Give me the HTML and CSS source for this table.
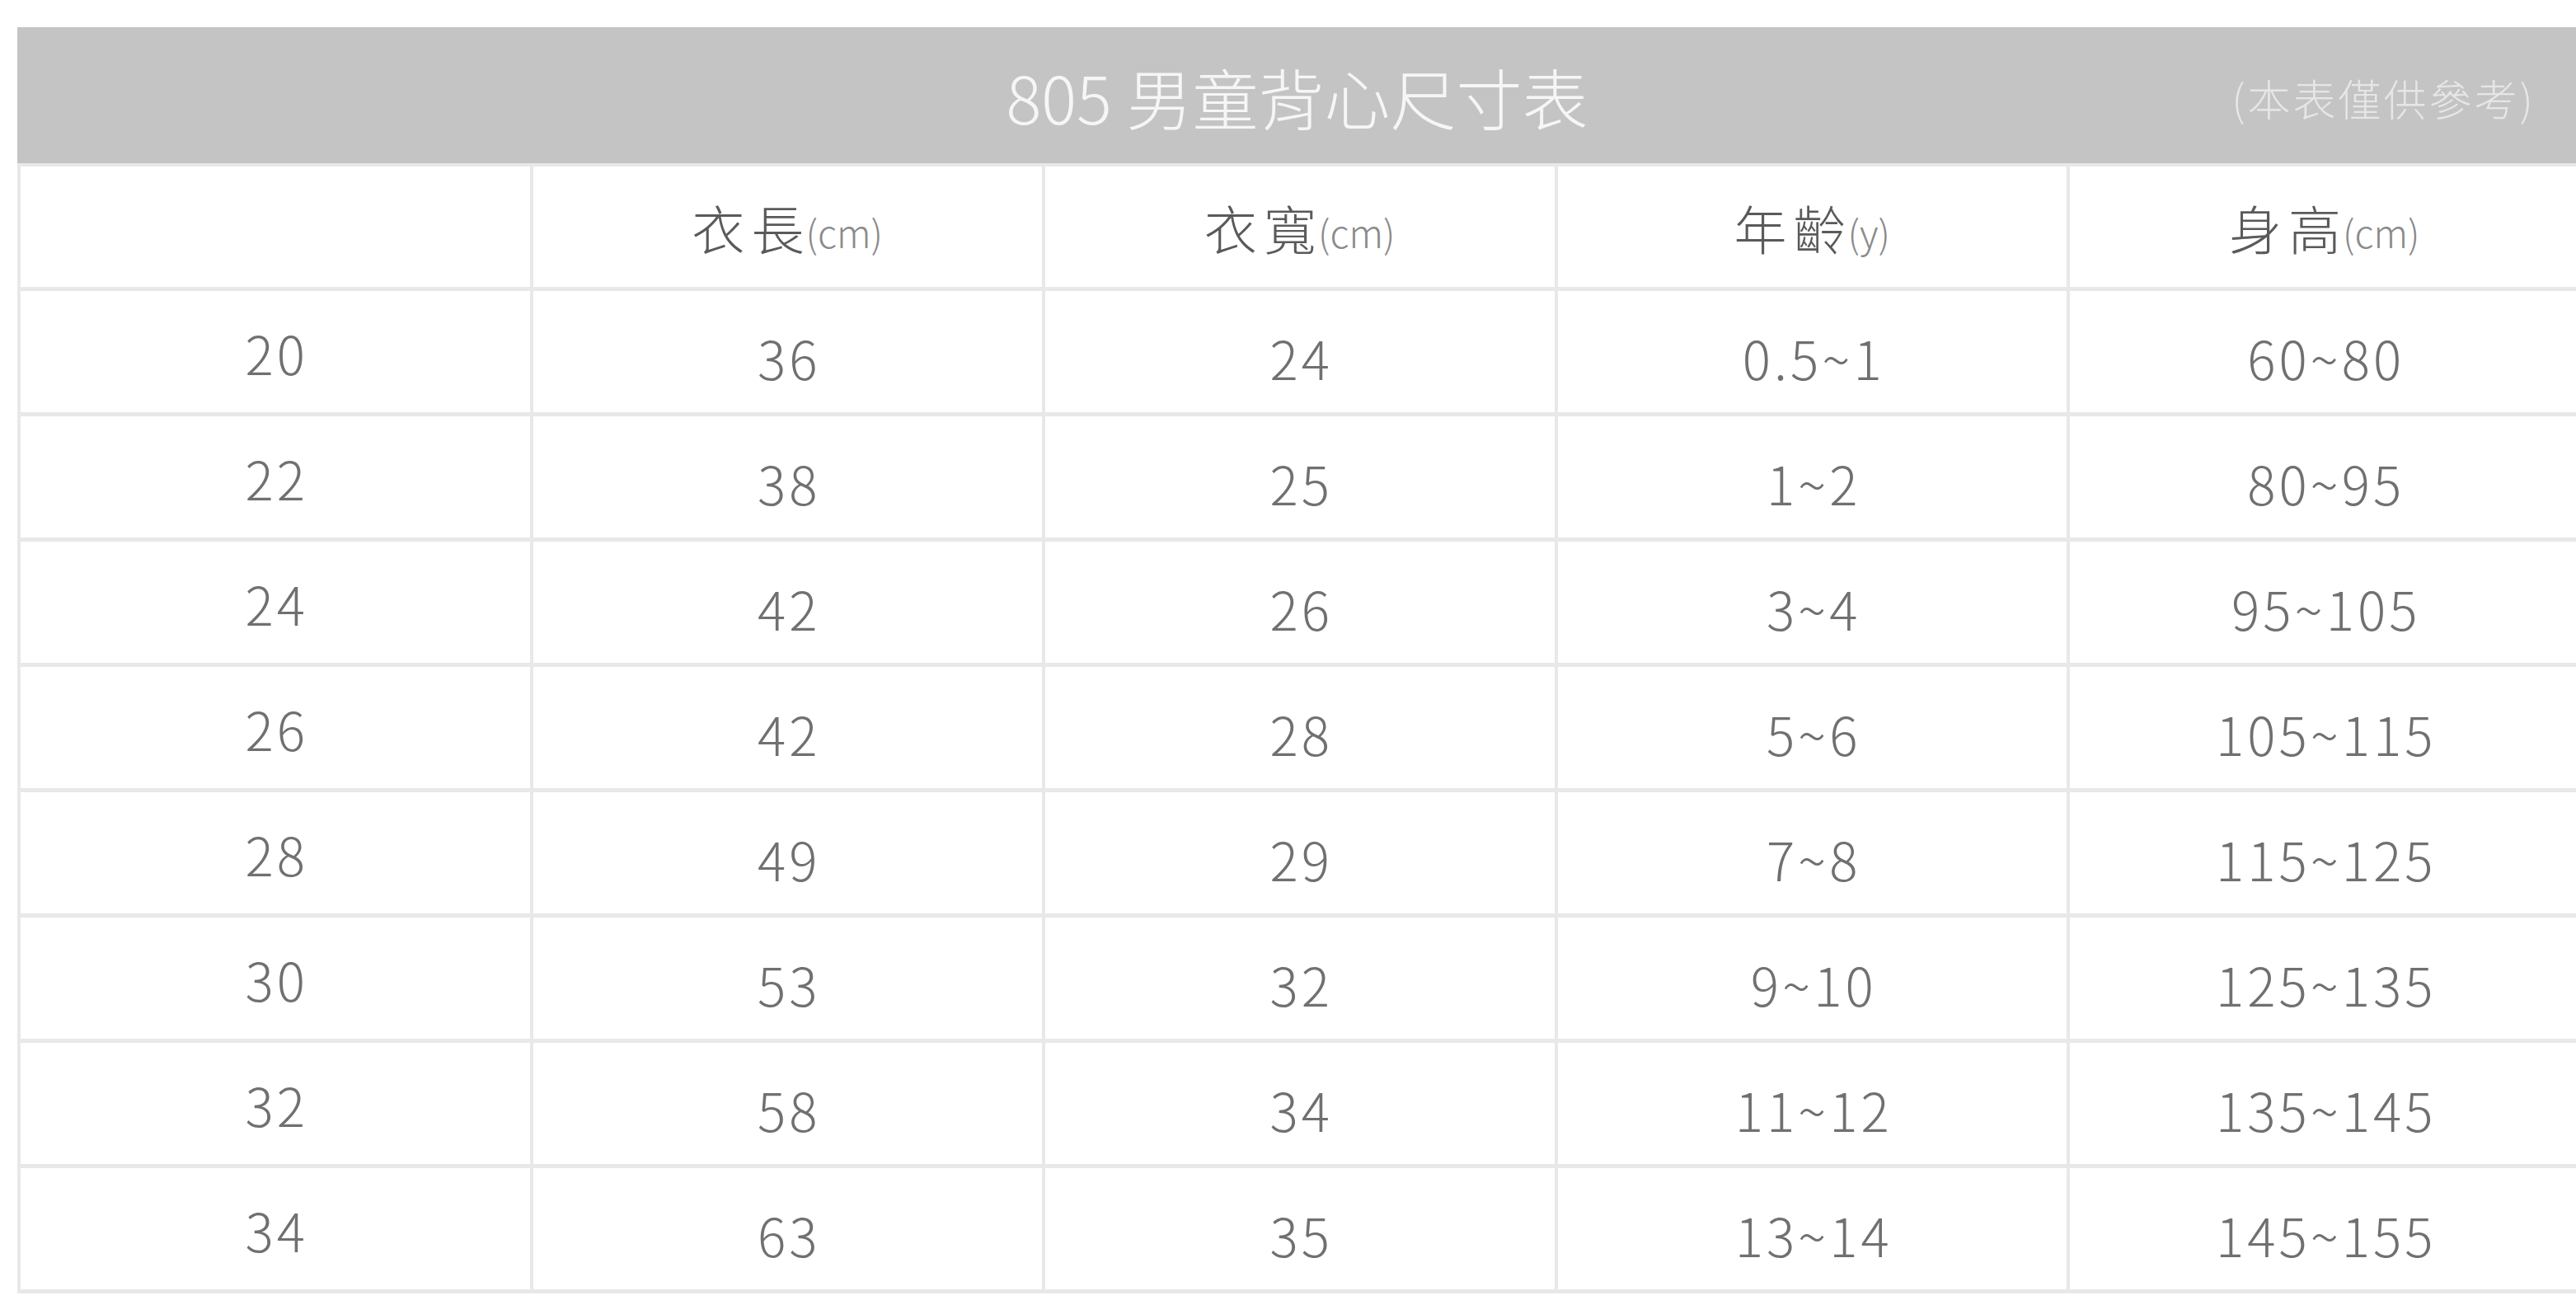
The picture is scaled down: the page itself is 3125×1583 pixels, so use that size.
FILE: index.html
```html
<!DOCTYPE html>
<html lang="zh-Hant">
<head>
<meta charset="utf-8">
<title>805 男童背心尺寸表</title>
<link rel="stylesheet" href="styles.css">
</head>
<body>
<div class="chart">
  <div class="title-bar">
    <span class="spacer"></span>
    <h1 class="title">805 男童背心尺寸表</h1>
    <span class="note">(本表僅供參考)</span>
  </div>
  <div class="grid">
    <div class="cell head"></div>
    <div class="cell head"><span class="lbl">衣長</span><span class="unit">(cm)</span></div>
    <div class="cell head"><span class="lbl">衣寬</span><span class="unit">(cm)</span></div>
    <div class="cell head"><span class="lbl">年齡</span><span class="unit">(y)</span></div>
    <div class="cell head"><span class="lbl">身高</span><span class="unit">(cm)</span></div>

    <div class="cell size">20</div><div class="cell val">36</div><div class="cell val">24</div><div class="cell val">0.5~1</div><div class="cell val">60~80</div>
    <div class="cell size">22</div><div class="cell val">38</div><div class="cell val">25</div><div class="cell val">1~2</div><div class="cell val">80~95</div>
    <div class="cell size">24</div><div class="cell val">42</div><div class="cell val">26</div><div class="cell val">3~4</div><div class="cell val">95~105</div>
    <div class="cell size">26</div><div class="cell val">42</div><div class="cell val">28</div><div class="cell val">5~6</div><div class="cell val">105~115</div>
    <div class="cell size">28</div><div class="cell val">49</div><div class="cell val">29</div><div class="cell val">7~8</div><div class="cell val">115~125</div>
    <div class="cell size">30</div><div class="cell val">53</div><div class="cell val">32</div><div class="cell val">9~10</div><div class="cell val">125~135</div>
    <div class="cell size">32</div><div class="cell val">58</div><div class="cell val">34</div><div class="cell val">11~12</div><div class="cell val">135~145</div>
    <div class="cell size">34</div><div class="cell val">63</div><div class="cell val">35</div><div class="cell val">13~14</div><div class="cell val">145~155</div>
  </div>
</div>
</body>
</html>
```

FILE: styles.css
```css
html, body {
  margin: 0;
  padding: 0;
  background: #ffffff;
  overflow: hidden;
}

body {
  font-family: "Noto Sans CJK TC", "Noto Sans", "Liberation Sans", sans-serif;
  font-weight: 300;
}

.chart {
  margin: 33px 0 0 21px;
  width: 3115px;
}

.title-bar {
  height: 165px;
  background: #c4c4c4;
  display: grid;
  grid-template-columns: 1fr auto 1fr;
  align-items: center;
}

.title {
  margin: 0 10px 0 0;
  font-size: 80px;
  font-weight: 300;
  color: #f6f6f6;
  line-height: 1;
  white-space: nowrap;
}

.note {
  justify-self: end;
  margin-right: 60px;
  font-size: 52px;
  color: #e6e6e6;
  line-height: 1;
  white-space: nowrap;
  padding-top: 6px;
  letter-spacing: 3px;
}

.grid {
  display: grid;
  grid-template-columns: repeat(5, 617.5px);
  grid-template-rows: 146px repeat(8, 147px);
  gap: 5px 4px;
  padding: 4px 0 5px 4px;
  background: #e8e8e8;
}

.cell {
  background: #ffffff;
  display: flex;
  align-items: center;
  justify-content: center;
  color: #707070;
  font-size: 64px;
  line-height: 1;
}

.size,
.val {
  letter-spacing: 4px;
  padding-left: 4px;
}

.head .lbl {
  font-size: 64px;
  color: #5a5a5a;
  letter-spacing: 8px;
  margin-right: -6px;
}

.head .unit {
  font-size: 46px;
  color: #8a8a8a;
  padding-top: 12px;
}

.val {
  padding-top: 12px;
}
```
